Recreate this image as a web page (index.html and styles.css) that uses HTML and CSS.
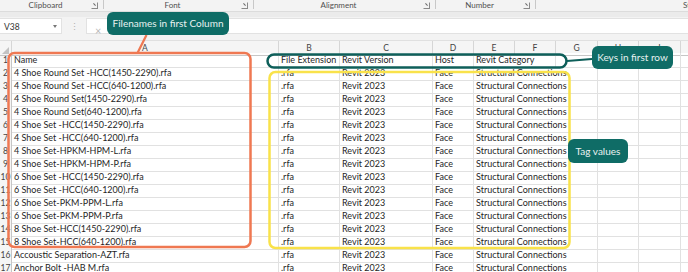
FILE: index.html
```html
<!DOCTYPE html>
<html lang="en">
<head>
  <meta charset="UTF-8">
  <title>Revit Families Sheet</title>
  <link rel="stylesheet" href="styles.css">
</head>
<body>

<div class="ribbon">
  <div class="group g-clip"><span class="glabel">Clipboard</span><span class="launch"></span></div>
  <div class="group g-font"><span class="glabel">Font</span><span class="launch"></span></div>
  <div class="group g-align"><span class="glabel">Alignment</span><span class="launch"></span></div>
  <div class="group g-num"><span class="glabel">Number</span><span class="launch"></span></div>
  <div class="group g-styles"><span class="glabel">Styles</span></div>
</div>
<div class="strip"></div>

<div class="fbar">
  <div class="namebox">V38<span class="caret"></span></div>
  <div class="dots">&#8942;</div>
  <div class="fx"><span class="cancel">&#215;</span></div>
</div>

<div class="sheet">
  <div class="row colhead">
    <div class="corner"><span class="tri"></span></div>
    <div class="ch">A</div><div class="ch">B</div><div class="ch">C</div><div class="ch">D</div><div class="ch">E</div>
    <div class="ch">F</div><div class="ch">G</div><div class="ch">H</div><div class="ch">I</div><div class="ch">J</div>
  </div>

  <div class="row">
    <div class="rh">1</div><div class="c">Name</div><div class="c">File Extension</div><div class="c">Revit Version</div><div class="c">Host</div>
    <div class="c span2">Revit Category</div><div class="c"></div><div class="c"></div><div class="c"></div><div class="c"></div>
  </div>
  <div class="row">
    <div class="rh">2</div><div class="c">4 Shoe Round Set -HCC(1450-2290).rfa</div><div class="c">.rfa</div><div class="c">Revit 2023</div><div class="c">Face</div>
    <div class="c span3">Structural Connections</div><div class="c"></div><div class="c"></div><div class="c"></div>
  </div>
  <div class="row">
    <div class="rh">3</div><div class="c">4 Shoe Round Set -HCC(640-1200).rfa</div><div class="c">.rfa</div><div class="c">Revit 2023</div><div class="c">Face</div>
    <div class="c span3">Structural Connections</div><div class="c"></div><div class="c"></div><div class="c"></div>
  </div>
  <div class="row">
    <div class="rh">4</div><div class="c">4 Shoe Round Set(1450-2290).rfa</div><div class="c">.rfa</div><div class="c">Revit 2023</div><div class="c">Face</div>
    <div class="c span3">Structural Connections</div><div class="c"></div><div class="c"></div><div class="c"></div>
  </div>
  <div class="row">
    <div class="rh">5</div><div class="c">4 Shoe Round Set(640-1200).rfa</div><div class="c">.rfa</div><div class="c">Revit 2023</div><div class="c">Face</div>
    <div class="c span3">Structural Connections</div><div class="c"></div><div class="c"></div><div class="c"></div>
  </div>
  <div class="row">
    <div class="rh">6</div><div class="c">4 Shoe Set -HCC(1450-2290).rfa</div><div class="c">.rfa</div><div class="c">Revit 2023</div><div class="c">Face</div>
    <div class="c span3">Structural Connections</div><div class="c"></div><div class="c"></div><div class="c"></div>
  </div>
  <div class="row">
    <div class="rh">7</div><div class="c">4 Shoe Set -HCC(640-1200).rfa</div><div class="c">.rfa</div><div class="c">Revit 2023</div><div class="c">Face</div>
    <div class="c span3">Structural Connections</div><div class="c"></div><div class="c"></div><div class="c"></div>
  </div>
  <div class="row">
    <div class="rh">8</div><div class="c">4 Shoe Set-HPKM-HPM-L.rfa</div><div class="c">.rfa</div><div class="c">Revit 2023</div><div class="c">Face</div>
    <div class="c span3">Structural Connections</div><div class="c"></div><div class="c"></div><div class="c"></div>
  </div>
  <div class="row">
    <div class="rh">9</div><div class="c">4 Shoe Set-HPKM-HPM-P.rfa</div><div class="c">.rfa</div><div class="c">Revit 2023</div><div class="c">Face</div>
    <div class="c span3">Structural Connections</div><div class="c"></div><div class="c"></div><div class="c"></div>
  </div>
  <div class="row">
    <div class="rh">10</div><div class="c">6 Shoe Set -HCC(1450-2290).rfa</div><div class="c">.rfa</div><div class="c">Revit 2023</div><div class="c">Face</div>
    <div class="c span3">Structural Connections</div><div class="c"></div><div class="c"></div><div class="c"></div>
  </div>
  <div class="row">
    <div class="rh">11</div><div class="c">6 Shoe Set -HCC(640-1200).rfa</div><div class="c">.rfa</div><div class="c">Revit 2023</div><div class="c">Face</div>
    <div class="c span3">Structural Connections</div><div class="c"></div><div class="c"></div><div class="c"></div>
  </div>
  <div class="row">
    <div class="rh">12</div><div class="c">6 Shoe Set-PKM-PPM-L.rfa</div><div class="c">.rfa</div><div class="c">Revit 2023</div><div class="c">Face</div>
    <div class="c span3">Structural Connections</div><div class="c"></div><div class="c"></div><div class="c"></div>
  </div>
  <div class="row">
    <div class="rh">13</div><div class="c">6 Shoe Set-PKM-PPM-P.rfa</div><div class="c">.rfa</div><div class="c">Revit 2023</div><div class="c">Face</div>
    <div class="c span3">Structural Connections</div><div class="c"></div><div class="c"></div><div class="c"></div>
  </div>
  <div class="row">
    <div class="rh">14</div><div class="c">8 Shoe Set-HCC(1450-2290).rfa</div><div class="c">.rfa</div><div class="c">Revit 2023</div><div class="c">Face</div>
    <div class="c span3">Structural Connections</div><div class="c"></div><div class="c"></div><div class="c"></div>
  </div>
  <div class="row">
    <div class="rh">15</div><div class="c">8 Shoe Set-HCC(640-1200).rfa</div><div class="c">.rfa</div><div class="c">Revit 2023</div><div class="c">Face</div>
    <div class="c span3">Structural Connections</div><div class="c"></div><div class="c"></div><div class="c"></div>
  </div>
  <div class="row">
    <div class="rh">16</div><div class="c">Accoustic Separation-AZT.rfa</div><div class="c">.rfa</div><div class="c">Revit 2023</div><div class="c">Face</div>
    <div class="c span3">Structural Connections</div><div class="c"></div><div class="c"></div><div class="c"></div>
  </div>
  <div class="row">
    <div class="rh">17</div><div class="c">Anchor Bolt -HAB M.rfa</div><div class="c">.rfa</div><div class="c">Revit 2023</div><div class="c">Face</div>
    <div class="c span3">Structural Connections</div><div class="c"></div><div class="c"></div><div class="c"></div>
  </div>
</div>

<!-- annotations drawn over the sheet -->
<div class="notes">
  <svg class="marks" width="688" height="272" viewBox="0 0 688 272">
    <line x1="146.5" y1="35" x2="137.5" y2="53" stroke="#ef7852" stroke-width="2.2"/>
    <rect x="8.5" y="53" width="242" height="194" rx="6" fill="none" stroke="#ef7852" stroke-width="2.5"/>
    <line x1="567" y1="61" x2="592" y2="59" stroke="#0e5f5a" stroke-width="2.2"/>
    <rect x="267.5" y="54.5" width="299" height="13" rx="6.5" fill="none" stroke="#0e5f5a" stroke-width="2.5"/>
    <rect x="269.5" y="72" width="300" height="176" rx="6" fill="none" stroke="#f9e24a" stroke-width="2.5"/>
  </svg>
  <div class="callout co-files">Filenames in first Column</div>
  <div class="callout co-keys">Keys in first row</div>
  <div class="callout co-tags">Tag values</div>
</div>

</body>
</html>
```

FILE: styles.css
```css
body {
  margin: 0;
  width: 688px;
  height: 272px;
  overflow: hidden;
  position: relative;
  background: #ffffff;
  font-family: Lato, "Liberation Sans", sans-serif;
  color: #1f1f1f;
}

/* ribbon group labels */
.ribbon {
  display: flex;
  height: 11px;
  background: #f3f3f3;
  border-bottom: 1px solid #dcdcdc;
  font-size: 8px;
  color: #505050;
  overflow: hidden;
}
.group {
  display: flex;
  flex-shrink: 0;
  align-items: center;
  border-right: 1px solid #c8c8c8;
  padding-right: 3px;
  box-sizing: border-box;
  height: 9px;
}
.glabel {
  flex: 1;
  text-align: center;
  line-height: 12px;
}
.g-clip { width: 104px; }
.g-font { width: 150px; }
.g-align { width: 182px; }
.g-num { width: 100px; }
.g-styles {
  width: 200px;
  border-right: none;
  padding-left: 147px;
}
.g-styles .glabel { text-align: left; }
.launch {
  width: 5px;
  height: 5px;
  border: 1px solid #8a8a8a;
  border-top-color: transparent;
  border-left-color: transparent;
  margin: 2px 2px 0 0;
  position: relative;
}
.launch::after {
  content: "";
  position: absolute;
  left: 1px;
  top: 1px;
  width: 3px;
  height: 1px;
  background: #6a6a6a;
  transform: rotate(45deg);
}
.strip {
  height: 5px;
  background: #ebebeb;
}

/* name box + formula bar */
.fbar {
  display: flex;
  align-items: flex-start;
  height: 23px;
  padding: 1px 0 0;
  box-sizing: border-box;
  background: #f3f3f3;
}
.namebox {
  width: 62px;
  height: 16px;
  background: #ffffff;
  border: 1px solid #e2e2e2;
  border-left: none;
  box-sizing: border-box;
  font-size: 8.5px;
  line-height: 16px;
  padding-left: 4px;
  position: relative;
  color: #333;
}
.caret {
  position: absolute;
  right: 4px;
  top: 6px;
  border: 2.5px solid transparent;
  border-top: 3px solid #777;
}
.dots {
  width: 24px;
  text-align: center;
  color: #b0b0b0;
  font-size: 9px;
  line-height: 17px;
}
.fx {
  flex: 1;
  height: 16px;
  background: #ffffff;
  border: 1px solid #e2e2e2;
  border-right: none;
  box-sizing: border-box;
  padding-left: 8px;
}
.cancel {
  color: #b8b8b8;
  font-size: 11px;
  line-height: 13px;
}

/* the sheet grid */
.sheet {
  border-top: 1px solid #e0e0e0;
}
.row {
  display: grid;
  grid-template-columns: 12px 267px 61px 93px 41px 41px 41px 42px 41px 42px 41px;
  height: 13px;
}
.colhead {
  background: #f5f5f5;
  height: 12px;
}
.corner {
  border-right: 1px solid #d6d6d6;
  border-bottom: 1px solid #c6c6c6;
  position: relative;
}
.tri {
  position: absolute;
  right: 2px;
  bottom: 1px;
  border-left: 7px solid transparent;
  border-bottom: 7px solid #c2c2c2;
}
.ch {
  border-right: 1px solid #d6d6d6;
  border-bottom: 1px solid #c6c6c6;
  text-align: center;
  font-size: 8.5px;
  line-height: 14px;
  color: #444;
}
.rh {
  background: #f5f5f5;
  border-right: 1px solid #c6c6c6;
  border-bottom: 1px solid #dedede;
  text-align: center;
  font-size: 8.5px;
  line-height: 14px;
  color: #444;
  overflow: hidden;
  white-space: nowrap;
}
.c {
  border-right: 1px solid #e1e1e1;
  border-bottom: 1px solid #e1e1e1;
  box-sizing: border-box;
  padding-left: 2px;
  font-size: 9px;
  line-height: 14px;
  white-space: nowrap;
  overflow: visible;
}
.span2 { grid-column: span 2; }
.span3 { grid-column: span 3; }

/* annotation layer */
.notes {
  position: absolute;
  left: 0;
  top: 0;
  width: 688px;
  height: 272px;
  pointer-events: none;
}
.marks {
  position: absolute;
  left: 0;
  top: 0;
}
.callout {
  position: absolute;
  background: #0f6c66;
  color: #e9f2f1;
  border-radius: 6px;
  font-size: 10px;
  text-align: center;
  box-sizing: border-box;
}
.co-files {
  left: 107px;
  top: 12px;
  width: 122px;
  height: 23px;
  line-height: 22px;
}
.co-keys {
  left: 592px;
  top: 46px;
  width: 81px;
  height: 23px;
  line-height: 23px;
}
.co-tags {
  left: 568px;
  top: 139px;
  width: 60px;
  height: 24px;
  line-height: 24px;
}
```
